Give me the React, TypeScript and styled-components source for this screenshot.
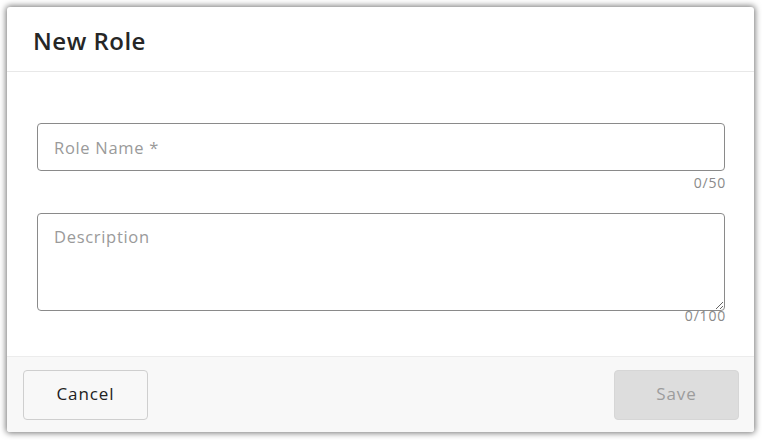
import React from "react";
import styled, { createGlobalStyle } from "styled-components";

const Global = createGlobalStyle`
  html, body { margin: 0; padding: 0; background: #ffffff; }
  body { font-family: "Open Sans", "Noto Sans", sans-serif; }
  * { box-sizing: border-box; }
`;

const Page = styled.div`
  width: 762px;
  height: 440px;
  padding: 7px 8px 8px 7px;
`;

const Dialog = styled.div`
  width: 747px;
  height: 425px;
  background: #ffffff;
  border-radius: 3px;
  box-shadow: 0 0 6px 1px rgba(0, 0, 0, 0.55);
  display: flex;
  flex-direction: column;
  overflow: hidden;
`;

const Header = styled.div`
  height: 65px;
  flex: none;
  border-bottom: 1px solid #e8e8e8;
  display: flex;
  align-items: center;
  padding: 2px 26px 0;
`;

const Title = styled.h2`
  margin: 0;
  font-size: 24px;
  font-weight: 600;
  color: #262626;
  letter-spacing: 0.5px;
`;

const Body = styled.div`
  flex: 1;
  padding: 51px 29px 0 30px;
  display: flex;
  flex-direction: column;
`;

const Field = styled.div<{ $gap?: number }>`
  display: flex;
  flex-direction: column;
  margin-bottom: ${(p) => p.$gap ?? 0}px;
`;

const inputBase = `
  width: 100%;
  border: 1px solid #8a8a8a;
  border-radius: 4px;
  font-family: "Open Sans", "Noto Sans", sans-serif;
  font-size: 16.5px;
  letter-spacing: 0.7px;
  color: #333;
  padding: 0 16px;
  outline: none;
  background: #fff;
  &::placeholder { color: #9a9a9a; }
`;

const Input = styled.input`
  ${inputBase}
  height: 48px;
`;

const TextArea = styled.textarea`
  ${inputBase}
  height: 98px;
  padding-top: 11px;
  resize: vertical;
  display: block;
`;

const Counter = styled.div<{ $top: number }>`
  align-self: flex-end;
  font-size: 14px;
  letter-spacing: 0.8px;
  margin-right: -1px;
  color: #8a8a8a;
  line-height: 15px;
  margin-top: ${(p) => p.$top}px;
`;

const Footer = styled.div`
  height: 76px;
  flex: none;
  background: #f8f8f8;
  border-top: 1px solid #ececec;
  display: flex;
  align-items: center;
  justify-content: space-between;
  padding: 0 15px 0 16px;
`;

const Button = styled.button<{ $disabled?: boolean }>`
  width: 125px;
  height: 50px;
  border-radius: 4px;
  border: 1px solid ${(p) => (p.$disabled ? "#d6d6d6" : "#cfcfcf")};
  background: ${(p) => (p.$disabled ? "#dddddd" : "#f8f8f8")};
  color: ${(p) => (p.$disabled ? "#9c9c9c" : "#222222")};
  font-family: "Open Sans", "Noto Sans", sans-serif;
  font-size: 17px;
  letter-spacing: 0.9px;
  padding: 0 0 2px;
  cursor: ${(p) => (p.$disabled ? "default" : "pointer")};
`;

export default function App() {
  return (
    <>
      <Global />
      <Page>
        <Dialog>
          <Header>
            <Title>New Role</Title>
          </Header>
          <Body>
            <Field $gap={23}>
              <Input placeholder="Role Name *" />
              <Counter $top={4}>0/50</Counter>
            </Field>
            <Field>
              <TextArea placeholder="Description" />
              <Counter $top={-3}>0/100</Counter>
            </Field>
          </Body>
          <Footer>
            <Button>Cancel</Button>
            <Button $disabled disabled>
              Save
            </Button>
          </Footer>
        </Dialog>
      </Page>
    </>
  );
}
